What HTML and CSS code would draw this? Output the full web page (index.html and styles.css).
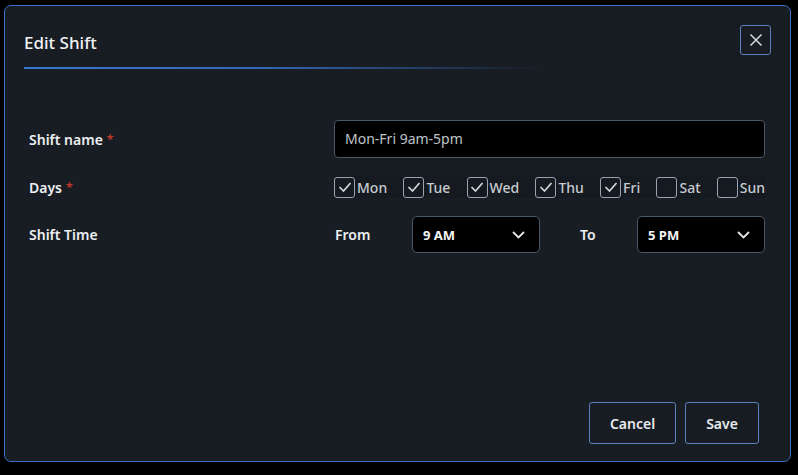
FILE: index.html
```html
<!DOCTYPE html>
<html lang="en">
<head>
    <meta charset="UTF-8">
    <title>Edit Shift</title>
    <link rel="stylesheet" href="styles.css">
</head>
<body>
    <div class="dialog">
        <div class="header">
            <div class="title">Edit Shift</div>
            <button class="close-btn">
                <svg width="14" height="14" viewBox="0 0 14 14"><path d="M1.5 1.5 L12.5 12.5 M12.5 1.5 L1.5 12.5" stroke="#d6dae0" stroke-width="1.5" fill="none"/></svg>
            </button>
        </div>
        <div class="header-line"></div>

        <div class="form">
            <div class="label">Shift name <span class="req">*</span></div>
            <div class="input">Mon-Fri 9am-5pm</div>

            <div class="label">Days <span class="req">*</span></div>
            <div class="days">
                <label class="day"><span class="box checked"><svg width="14" height="12" viewBox="0 0 14 12"><path d="M1.5 6 L5.5 10 L12.5 2" stroke="#d2d6db" stroke-width="1.7" fill="none"/></svg></span>Mon</label>
                <label class="day"><span class="box checked"><svg width="14" height="12" viewBox="0 0 14 12"><path d="M1.5 6 L5.5 10 L12.5 2" stroke="#d2d6db" stroke-width="1.7" fill="none"/></svg></span>Tue</label>
                <label class="day"><span class="box checked"><svg width="14" height="12" viewBox="0 0 14 12"><path d="M1.5 6 L5.5 10 L12.5 2" stroke="#d2d6db" stroke-width="1.7" fill="none"/></svg></span>Wed</label>
                <label class="day"><span class="box checked"><svg width="14" height="12" viewBox="0 0 14 12"><path d="M1.5 6 L5.5 10 L12.5 2" stroke="#d2d6db" stroke-width="1.7" fill="none"/></svg></span>Thu</label>
                <label class="day"><span class="box checked"><svg width="14" height="12" viewBox="0 0 14 12"><path d="M1.5 6 L5.5 10 L12.5 2" stroke="#d2d6db" stroke-width="1.7" fill="none"/></svg></span>Fri</label>
                <label class="day"><span class="box"></span>Sat</label>
                <label class="day"><span class="box"></span>Sun</label>
            </div>

            <div class="label">Shift Time</div>
            <div class="time">
                <div class="time-label">From</div>
                <div class="select">9 AM
                    <svg width="13" height="8" viewBox="0 0 13 8"><path d="M1 1 L6.5 6.5 L12 1" stroke="#e4e7eb" stroke-width="1.8" fill="none"/></svg>
                </div>
                <div class="time-label to">To</div>
                <div class="select">5 PM
                    <svg width="13" height="8" viewBox="0 0 13 8"><path d="M1 1 L6.5 6.5 L12 1" stroke="#e4e7eb" stroke-width="1.8" fill="none"/></svg>
                </div>
            </div>
        </div>

        <div class="footer">
            <button class="btn cancel">Cancel</button>
            <button class="btn save">Save</button>
        </div>
    </div>
</body>
</html>
```

FILE: styles.css
```css
body {
    margin: 0;
    background-color: #000;
    font-family: "Noto Sans", "Open Sans", sans-serif;
    color: #e8eaed;
}

.dialog {
    box-sizing: border-box;
    display: flex;
    flex-direction: column;
    width: 787px;
    height: 457px;
    margin: 5px 0 0 4px;
    background-color: #181d24;
    border: 1.5px solid #3b70c4;
    border-radius: 7px;
}

.header {
    display: flex;
    justify-content: space-between;
    align-items: flex-start;
    padding: 19px 19px 0 19px;
}

.title {
    margin-top: 6px;
    font-size: 17px;
    line-height: 24px;
    font-weight: 500;
    color: #f0f2f4;
}

.close-btn {
    box-sizing: border-box;
    display: flex;
    align-items: center;
    justify-content: center;
    width: 31px;
    height: 30px;
    padding: 0;
    background-color: #181d24;
    border: 1.5px solid #5a82bd;
    border-radius: 3px;
}

.header-line {
    width: 516px;
    height: 2px;
    margin: 12px 0 0 19px;
    background: linear-gradient(to right, #3a76d0 0%, #3468b8 45%, rgba(52, 104, 184, 0) 100%);
}

.form {
    display: grid;
    grid-template-columns: 305px 431px;
    align-items: center;
    row-gap: 18px;
    margin-top: 51px;
    padding: 0 24px;
}

.label {
    font-size: 14px;
    font-weight: 600;
    color: #eceef1;
}

.req {
    color: #c0392b;
    font-size: 13px;
    vertical-align: top;
}

.input {
    box-sizing: border-box;
    height: 38px;
    padding: 0 10px;
    line-height: 35px;
    background-color: #000;
    border: 1.5px solid #4a5869;
    border-radius: 4px;
    font-size: 14px;
    color: #bfc4ca;
}

.days {
    display: flex;
    justify-content: space-between;
    align-items: center;
    height: 22px;
    background-color: #151a20;
}

.day {
    display: flex;
    align-items: center;
    gap: 2px;
    font-size: 14px;
    font-weight: 500;
    color: #c6cad0;
}

.box {
    box-sizing: border-box;
    display: flex;
    align-items: center;
    justify-content: center;
    width: 21px;
    height: 21px;
    border: 1.5px solid #9aa3ae;
    border-radius: 3px;
}

.time {
    display: grid;
    grid-template-columns: 78px 128px 97px 128px;
    align-items: center;
}

.time-label {
    padding-left: 1px;
    font-size: 14px;
    font-weight: 600;
    color: #eceef1;
}

.time-label.to {
    padding-left: 40px;
}

.select {
    box-sizing: border-box;
    display: flex;
    justify-content: space-between;
    align-items: center;
    height: 37px;
    padding: 0 14px 0 10px;
    background-color: #000;
    border: 1.5px solid #4a5869;
    border-radius: 5px;
    font-size: 13px;
    font-weight: 700;
    color: #f4f5f7;
}

.footer {
    display: flex;
    justify-content: flex-end;
    gap: 9px;
    margin-top: auto;
    padding: 0 31px 17px 0;
}

.btn {
    box-sizing: border-box;
    height: 42px;
    background-color: #181d24;
    border: 1.5px solid #5a82bd;
    border-radius: 3px;
    font-family: "Noto Sans", "Open Sans", sans-serif;
    font-size: 14px;
    font-weight: 600;
    color: #e8eaed;
}

.cancel {
    width: 87px;
}

.save {
    width: 74px;
}
```
